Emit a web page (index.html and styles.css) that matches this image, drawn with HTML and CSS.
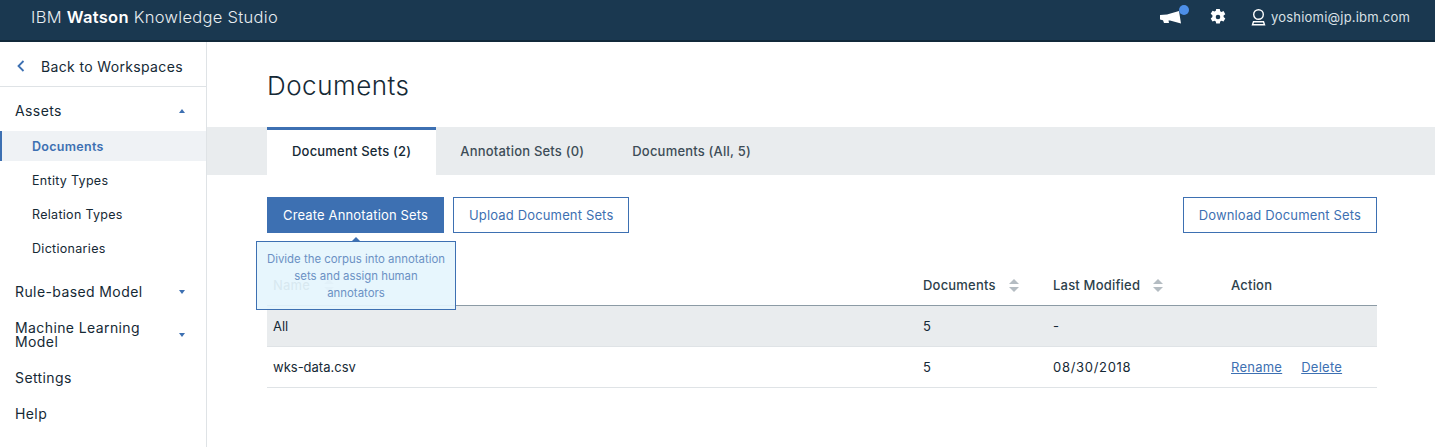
FILE: index.html
```html
<!DOCTYPE html>
<html lang="en">
<head>
    <meta charset="UTF-8">
    <title>IBM Watson Knowledge Studio</title>
    <link rel="stylesheet" href="styles.css">
</head>
<body>
    <header class="topbar">
        <div class="brand">IBM <b>Watson</b> Knowledge Studio</div>
        <div class="topbar-tools">
            <span class="notify">
                <svg width="21" height="13" viewBox="0 0 21 13"><path d="M0 4 L7 3.5 L19 0 L21 12.5 L10 9.5 L8.5 9.5 L9 12 L4 12 L3 9.2 L0 8.5 Z" fill="#fff"/></svg>
                <i class="notify-dot"></i>
            </span>
            <svg class="gear" width="18" height="18" viewBox="0 0 18 18"><path fill="#fff" fill-rule="evenodd" d="M7.2 1h3.6l.4 2.2 1.2.7 2.1-.8 1.8 3.1-1.7 1.4v1.4l1.7 1.4-1.8 3.100-2.100-.8-1.200.7-.4 2.200H7.200l-.4-2.200-1.200-.7-2.100.8-1.800-3.100 1.700-1.400V7.200L1.700 5.800l1.800-3.100 2.100.8 1.200-.7zM9 6.700a2.300 2.300 0 1 0 0 4.600 2.300 2.300 0 0 0 0-4.600z"/></svg>
            <span class="user">
                <svg width="15" height="17" viewBox="0 0 15 17"><circle cx="7.500" cy="5.500" r="4.800" fill="none" stroke="#fff" stroke-width="1.400"/><path d="M2.500 12.700h10l1 3H1.500z" fill="none" stroke="#fff" stroke-width="1.400"/></svg>
                yoshiomi@jp.ibm.com
            </span>
        </div>
    </header>

    <div class="layout">
        <nav class="sidebar">
            <a class="back-link">
                <svg width="8" height="12" viewBox="0 0 8 12"><path d="M6.500 1 L1.500 6 L6.500 11" fill="none" stroke="#3d70b2" stroke-width="1.800"/></svg>
                Back to Workspaces
            </a>
            <ul class="nav">
                <li class="nav-item">Assets <i class="caret caret-up"></i></li>
                <li>
                    <ul class="subnav">
                        <li class="subnav-item active">Documents</li>
                        <li class="subnav-item">Entity Types</li>
                        <li class="subnav-item">Relation Types</li>
                        <li class="subnav-item">Dictionaries</li>
                    </ul>
                </li>
                <li class="nav-item">Rule-based Model <i class="caret"></i></li>
                <li class="nav-item"><span class="nav-wrap">Machine Learning Model</span> <i class="caret"></i></li>
                <li class="nav-item">Settings</li>
                <li class="nav-item">Help</li>
            </ul>
        </nav>

        <main class="content">
            <h1 class="page-title">Documents</h1>

            <div class="tabs">
                <a class="tab active">Document Sets (2)</a>
                <a class="tab">Annotation Sets (0)</a>
                <a class="tab">Documents (All, 5)</a>
            </div>

            <div class="panel">
                <div class="toolbar">
                    <button class="btn btn-primary">Create Annotation Sets</button>
                    <button class="btn">Upload Document Sets</button>
                    <button class="btn btn-right">Download Document Sets</button>
                    <div class="tooltip">Divide the corpus into annotation sets and assign human annotators</div>
                </div>

                <table class="doc-table">
                    <thead>
                        <tr>
                            <th class="col-name">Name <i class="sort"></i></th>
                            <th class="col-docs">Documents <i class="sort"></i></th>
                            <th class="col-date">Last Modified <i class="sort"></i></th>
                            <th class="col-action">Action</th>
                        </tr>
                    </thead>
                    <tbody>
                        <tr class="row-all">
                            <td>All</td>
                            <td>5</td>
                            <td>-</td>
                            <td></td>
                        </tr>
                        <tr>
                            <td>wks-data.csv</td>
                            <td>5</td>
                            <td class="date">08/30/2018</td>
                            <td><a class="link">Rename</a><a class="link">Delete</a></td>
                        </tr>
                    </tbody>
                </table>
            </div>
        </main>
    </div>
</body>
</html>
```

FILE: styles.css
```css
* {
    box-sizing: border-box;
}

html, body {
    height: 100%;
}

body {
    margin: 0;
    display: flex;
    flex-direction: column;
    font-family: Inter, "Noto Sans", sans-serif;
    color: #152935;
    background: #fff;
    overflow: hidden;
}

/* top bar */
.topbar {
    flex: none;
    height: 42px;
    display: flex;
    align-items: center;
    justify-content: space-between;
    padding: 0 25px 6px 31px;
    background: #1a3850;
    border-bottom: 2px solid #11293a;
    color: #fff;
}

.brand {
    font-size: 16.5px;
    font-weight: 300;
    letter-spacing: 0.3px;
    color: #e8edf1;
}

.brand b {
    font-weight: 600;
    color: #fff;
}

.topbar-tools {
    display: flex;
    align-items: center;
}

.notify {
    position: relative;
    display: flex;
    margin-right: 28px;
}

.notify-dot {
    position: absolute;
    top: -6px;
    right: -8px;
    width: 10px;
    height: 10px;
    border-radius: 50%;
    background: #4d8fe8;
}

.gear {
    margin-right: 24px;
}

.user {
    display: flex;
    align-items: center;
    gap: 5px;
    font-size: 13px;
    letter-spacing: 0.2px;
    color: #d9e0e5;
}

/* sidebar */
.layout {
    flex: 1;
    display: flex;
    min-height: 0;
}

.sidebar {
    flex: none;
    width: 207px;
    border-right: 1px solid #dfe3e6;
}

.back-link {
    display: flex;
    align-items: center;
    gap: 16px;
    height: 45px;
    padding: 4px 0 0 17px;
    font-size: 14px;
    letter-spacing: 0.35px;
    border-bottom: 1px solid #dfe3e6;
}

.nav, .subnav {
    list-style: none;
    margin: 0;
    padding: 0;
}

.nav {
    padding-top: 6px;
}

.nav-item {
    display: flex;
    align-items: center;
    justify-content: space-between;
    padding: 11px 21px 11px 15px;
    font-size: 14px;
    line-height: 14px;
    letter-spacing: 0.4px;
}

.nav-wrap {
    width: 150px;
}

.caret {
    border-left: 3.5px solid transparent;
    border-right: 3.5px solid transparent;
    border-top: 4px solid #3d70b2;
    width: 0;
    height: 0;
}

.caret-up {
    border-top: 0;
    border-bottom: 4px solid #3d70b2;
}

.subnav {
    display: flex;
    flex-direction: column;
    gap: 4px;
    margin: 2px 0 11px;
}

.subnav-item {
    height: 30px;
    line-height: 31px;
    padding-left: 32px;
    font-size: 12.5px;
    letter-spacing: 0.3px;
}

.subnav-item.active {
    padding-left: 30px;
    border-left: 2px solid #3d70b2;
    background: #eff2f5;
    color: #3d70b2;
    font-weight: 600;
}

/* main */
.content {
    flex: 1;
    min-width: 0;
}

.page-title {
    height: 85px;
    margin: 0;
    padding: 26px 0 0 60px;
    font-size: 26px;
    line-height: 36px;
    font-weight: 300;
    letter-spacing: 0.5px;
}

.tabs {
    display: flex;
    height: 48px;
    padding-left: 60px;
    background: #e9ecee;
}

.tab {
    display: flex;
    align-items: center;
    padding: 0 24px;
    font-size: 13px;
    font-weight: 500;
    letter-spacing: 0.2px;
    color: #3d4c57;
}

.tab.active {
    background: #fff;
    border-top: 3px solid #3d70b2;
    padding: 0 25px 3px;
    color: #152935;
}

.panel {
    padding: 22px 58px 0 60px;
}

.toolbar {
    position: relative;
    display: flex;
    gap: 9px;
}

.btn {
    height: 36px;
    padding: 0 15px;
    border: 1px solid #3d70b2;
    background: #fff;
    color: #3d70b2;
    font-family: inherit;
    font-size: 13px;
    letter-spacing: 0.15px;
}

.btn-primary {
    background: #3d70b2;
    color: #fff;
}

.btn-right {
    margin-left: auto;
}

.tooltip {
    position: absolute;
    z-index: 2;
    top: 44px;
    left: -11px;
    width: 200px;
    height: 69px;
    padding: 9px 8px 0;
    border: 1px solid #3d70b2;
    background: rgba(229, 245, 253, 0.93);
    color: #6b91c4;
    font-size: 11.4px;
    line-height: 17px;
    text-align: center;
}

.tooltip::before {
    content: "";
    position: absolute;
    top: -5px;
    left: 94px;
    border-left: 5px solid transparent;
    border-right: 5px solid transparent;
    border-bottom: 5px solid #3d70b2;
}

.doc-table {
    width: 1110px;
    margin-top: 32px;
    border-collapse: collapse;
    table-layout: fixed;
    font-size: 13px;
}

.doc-table th {
    height: 40px;
    padding: 0 6px;
    text-align: left;
    font-weight: 500;
    letter-spacing: 0.2px;
    color: #2d3f4b;
    border-bottom: 1px solid #8c9ba5;
}

.doc-table td {
    height: 41px;
    padding: 0 6px;
    border-bottom: 1px solid #dfe3e6;
}

.col-name {
    width: 650px;
}

.col-docs {
    width: 130px;
}

.col-date {
    width: 178px;
    letter-spacing: 0.15px;
}

.col-date .sort {
    margin-left: 9px;
}

.date {
    letter-spacing: 0.7px;
}

.row-all {
    background: #e9ecee;
}

.sort {
    display: inline-block;
    position: relative;
    width: 10px;
    height: 13px;
    margin-left: 10px;
    vertical-align: -2px;
}

.sort::before, .sort::after {
    content: "";
    position: absolute;
    left: 0;
    border-left: 5px solid transparent;
    border-right: 5px solid transparent;
}

.sort::before {
    top: 0;
    border-bottom: 5px solid #b4bcc2;
}

.sort::after {
    bottom: 0;
    border-top: 5px solid #b4bcc2;
}

.link {
    margin-right: 19px;
    letter-spacing: 0.25px;
    color: #3d70b2;
    text-decoration: underline;
}
```
